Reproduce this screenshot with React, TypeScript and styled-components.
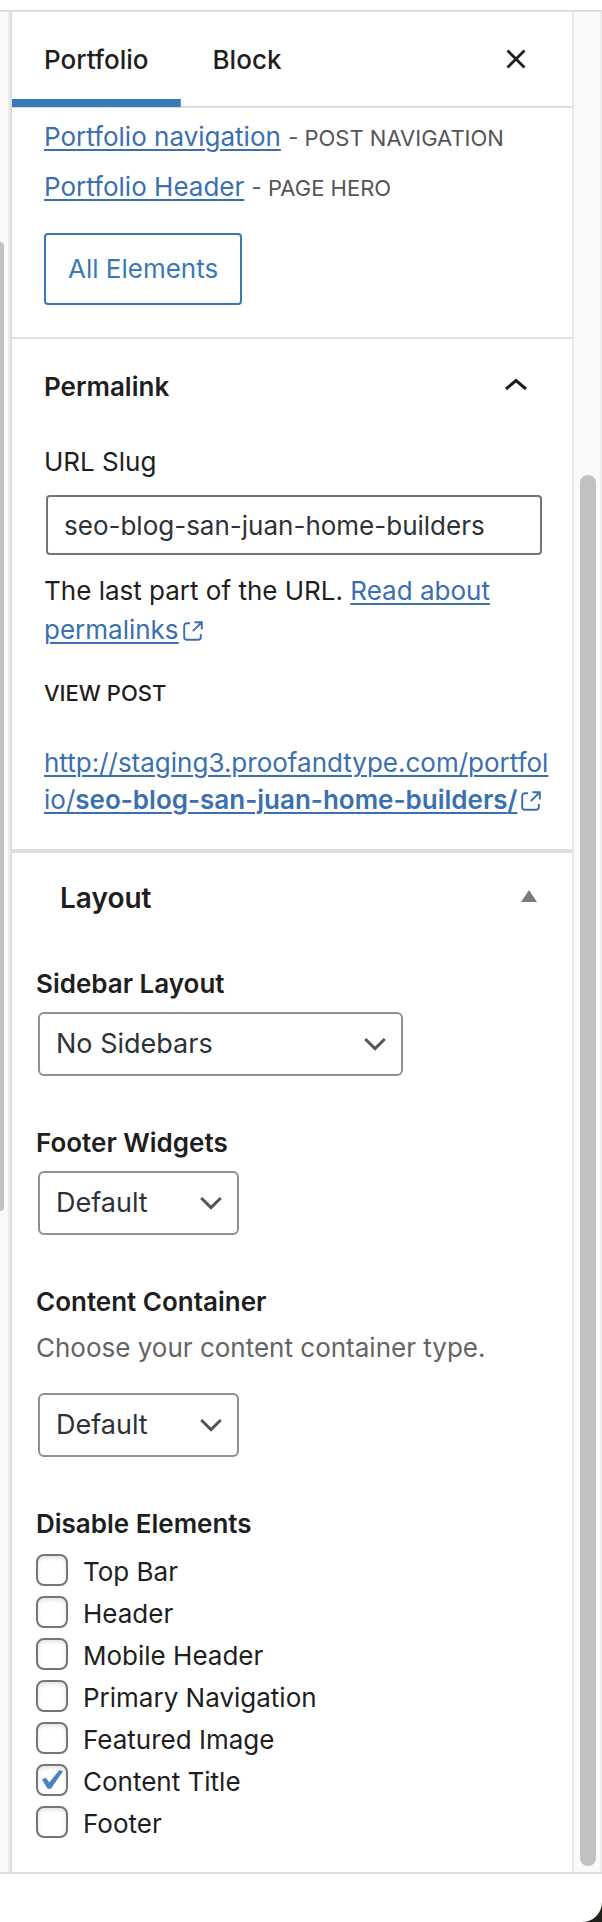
import React, { useState } from "react";
import styled, { createGlobalStyle, css } from "styled-components";

const GlobalStyle = createGlobalStyle`
  *, *::before, *::after { box-sizing: border-box; }
  body {
    margin: 0;
    background: #fff;
    color: #1e1e1e;
    font-family: Inter, "Liberation Sans", sans-serif;
    font-size: 26px;
    line-height: 36px;
  }
  h2, h3, p, fieldset, legend { margin: 0; padding: 0; border: 0; }
  button, input, select { font: inherit; color: inherit; }
`;

const Page = styled.div`
  display: flex;
  flex-direction: column;
  padding-top: 10px;
`;

const Editor = styled.div`
  display: grid;
  grid-template-columns: 8px minmax(0, 1fr) 28px;
  border-top: 2px solid #dedede;
  border-bottom: 2px solid #dedede;
`;

const Rail = styled.div<{ $rows: string }>`
  display: grid;
  grid-template-rows: ${(p) => p.$rows};
  background: #fafafa;
`;

const CanvasRail = styled(Rail)`
  padding-right: 4px;
`;

const PanelRail = styled(Rail)`
  padding: 0 4px 0 6px;
  border-right: 2px solid #ededed;
`;

const Thumb = styled.div<{ $cut?: boolean }>`
  grid-row: 2;
  background: #c1c1c1;
  border-radius: ${(p) => (p.$cut ? "0 8px 8px 0" : "8px")};
`;

const Sidebar = styled.aside`
  border-left: 2px solid #ededed;
  border-right: 2px solid #e8e8e8;
`;

const SidebarInner = styled.div`
  border-left: 2px solid #dcdcdc;
`;

const Tabs = styled.header`
  display: flex;
  height: 96px;
  border-bottom: 2px solid #ddd;
`;

const Tab = styled.button<{ $active?: boolean }>`
  height: 95px;
  padding: 0 32px;
  border: 0;
  background: ${(p) =>
    p.$active ? "linear-gradient(#387ab5, #387ab5) bottom / 100% 8px no-repeat" : "none"};
  font-weight: 500;
`;

const CloseButton = styled.button`
  display: flex;
  align-items: center;
  margin-left: auto;
  padding: 0 46px 0 32px;
  border: 0;
  background: none;
`;

const linkLook = css`
  color: #3a6fb0;
  text-decoration: underline;
  text-decoration-thickness: 2px;
  text-underline-offset: 3px;
`;

const Link = styled.a`
  ${linkLook}

  b { font-weight: 600; }
`;

const ElementsSection = styled.section`
  padding: 11px 32px 32px;
  border-bottom: 2px solid #dfdfdf;
`;

const ElementList = styled.div`
  display: flex;
  flex-direction: column;
  gap: 14px;
  margin-bottom: 28px;
`;

const Kind = styled.span`
  color: #555;
  font-size: 22px;
  line-height: 24px;
  text-transform: uppercase;
`;

const OutlineButton = styled.button`
  display: block;
  height: 72px;
  padding: 0 22px;
  border: 2px solid #387ab5;
  border-radius: 4px;
  background: #fff;
  color: #387ab5;
`;

const PermalinkSection = styled.section`
  padding: 30px 30px 31px 32px;
  border-bottom: 4px solid #dedede;
`;

const SectionToggle = styled.button`
  display: flex;
  align-items: center;
  justify-content: space-between;
  width: 100%;
  padding: 0 15px 0 0;
  border: 0;
  background: none;
  text-align: left;

  & > svg { margin-bottom: 4px; }
`;

const PermalinkTitle = styled.span`
  font-weight: 600;
`;

const SlugLabel = styled.label`
  display: block;
  margin: 39px 0 15px;
`;

const SlugInput = styled.input`
  display: block;
  width: calc(100% - 2px);
  height: 60px;
  margin-left: 2px;
  padding: 0 16px;
  border: 2px solid #757575;
  border-radius: 4px;
  background: #fff;
  color: #2c3338;
`;

const Help = styled.p`
  margin-top: 16px;
  line-height: 39px;
`;

const ViewPost = styled.h3`
  margin: 26px 0 33px;
  font-size: 22px;
  font-weight: 500;
  text-transform: uppercase;
`;

const PostUrl = styled.p`
  margin-right: -8px;
  line-height: 37px;
  word-break: break-all;
`;

const ExternalSvg = styled.svg`
  display: inline-block;
  margin-left: 4px;
  vertical-align: -2px;
`;

const LayoutSection = styled.section`
  padding: 25px 24px 29px;
`;

const LayoutToggle = styled(SectionToggle)`
  padding: 0 11px 0 24px;
`;

const LayoutTitle = styled.span`
  font-size: 28px;
  font-weight: 600;
  line-height: 40px;
`;

const Fields = styled.div`
  display: flex;
  flex-direction: column;
  gap: 49px;
  margin-top: 48px;
`;

const Field = styled.div`
  display: flex;
  flex-direction: column;
  align-items: flex-start;
`;

const FieldLabel = styled.label`
  margin-bottom: 10px;
  font-weight: 600;
`;

const Hint = styled.p`
  margin-bottom: 27px;
  color: #646464;
`;

const SelectWrap = styled.div<{ $wide?: boolean }>`
  display: grid;
  align-items: center;
  width: ${(p) => (p.$wide ? "365px" : "201px")};
  max-width: 100%;
  margin-left: 2px;

  & > * { grid-area: 1 / 1; }
  & > svg { justify-self: end; margin-right: 17px; pointer-events: none; }
`;

const Select = styled.select`
  width: 100%;
  height: 64px;
  padding: 0 50px 0 16px;
  border: 2px solid #8c8f94;
  border-radius: 6px;
  appearance: none;
  background: #fff;
  color: #2c3338;
  font-size: 27px;
`;

const Group = styled.fieldset`
  min-width: 0;
`;

const Legend = styled.legend`
  margin-bottom: 7px;
  font-weight: 600;
`;

const CheckRow = styled.label`
  display: flex;
  align-items: center;
  gap: 15px;
  height: 42px;
`;

const CheckBoxWrap = styled.span`
  display: grid;
  place-items: center;
  & > * { grid-area: 1 / 1; }
  & > svg { pointer-events: none; }
`;

const CheckBox = styled.input`
  width: 32px;
  height: 32px;
  margin: 0;
  appearance: none;
  border: 2px solid #757575;
  border-radius: 8px;
  background: #fff;
  box-shadow: inset 0 2px 4px rgba(0, 0, 0, 0.12);
`;

const CheckText = styled.span`
  padding-top: 3px;
`;

const Footer = styled.footer`
  height: 48px;
  background: #20211d;

  &::before {
    content: "";
    display: block;
    height: 100%;
    border-bottom-right-radius: 20px;
    background: #fff;
  }
`;

const CloseIcon = () => (
  <svg width="20" height="20" viewBox="0 0 20 20" fill="none" stroke="#1e1e1e" strokeWidth="2.8">
    <path d="M1.5 1.5l17 17M18.5 1.5l-17 17" />
  </svg>
);

const ChevronUp = () => (
  <svg width="22" height="14" viewBox="0 0 22 14" fill="none" stroke="#1e1e1e" strokeWidth="3">
    <path d="M1 11l10-8.5L21 11" />
  </svg>
);

const ChevronDown = () => (
  <svg width="22" height="14" viewBox="0 0 22 14" fill="none" stroke="#555" strokeWidth="3">
    <path d="M1.2 2l9.8 9.6L20.8 2" />
  </svg>
);

const Triangle = () => (
  <svg width="16" height="12" viewBox="0 0 16 12">
    <path d="M8 0l8 12H0z" fill="#787c82" />
  </svg>
);

const Tick = () => (
  <svg width="24" height="22" viewBox="0 0 24 22" fill="#4a82c3">
    <path d="M2 10.5l3.8-1.7 3.4 4.6L19.5 1 23 2.2 11 19.8H7.6z" />
  </svg>
);

const ExternalIcon = () => (
  <ExternalSvg width="20" height="20" viewBox="0 0 20 20" fill="none" stroke="#3a6fb0" strokeWidth="1.9" aria-hidden>
    <path d="M7 2.2H4A2.8 2.8 0 0 0 1.2 5v11A2.8 2.8 0 0 0 4 18.8h11a2.8 2.8 0 0 0 2.8-2.8v-3" />
    <path d="M11.5 1.2h7.3v7.3M18.5 1.5L9.8 10.2" />
  </ExternalSvg>
);

const ELEMENTS = [
  "Top Bar",
  "Header",
  "Mobile Header",
  "Primary Navigation",
  "Featured Image",
  "Content Title",
  "Footer",
];

type SelectFieldProps = { id: string; label: string; hint?: string; options: string[]; wide?: boolean };

const SelectField = ({ id, label, hint, options, wide }: SelectFieldProps) => (
  <Field>
    <FieldLabel htmlFor={id}>{label}</FieldLabel>
    {hint && <Hint>{hint}</Hint>}
    <SelectWrap $wide={wide}>
      <Select id={id}>
        {options.map((o) => (
          <option key={o}>{o}</option>
        ))}
      </Select>
      <ChevronDown />
    </SelectWrap>
  </Field>
);

export default function App() {
  const [disabled, setDisabled] = useState<string[]>(["Content Title"]);
  const [slug, setSlug] = useState("seo-blog-san-juan-home-builders");

  const toggle = (name: string) =>
    setDisabled((list) => (list.includes(name) ? list.filter((n) => n !== name) : [...list, name]));

  return (
    <Page>
      <GlobalStyle />
      <Editor>
        <CanvasRail $rows="230fr 969fr 661fr">
          <Thumb $cut />
        </CanvasRail>
        <Sidebar>
          <SidebarInner>
            <Tabs>
              <Tab $active>Portfolio</Tab>
              <Tab>Block</Tab>
              <CloseButton aria-label="Close settings">
                <CloseIcon />
              </CloseButton>
            </Tabs>

            <ElementsSection>
              <ElementList>
                <p>
                  <Link href="#navigation">Portfolio navigation</Link> <Kind>- Post Navigation</Kind>
                </p>
                <p>
                  <Link href="#header">Portfolio Header</Link> <Kind>- Page Hero</Kind>
                </p>
              </ElementList>
              <OutlineButton>All Elements</OutlineButton>
            </ElementsSection>

            <PermalinkSection>
              <SectionToggle aria-expanded="true">
                <PermalinkTitle>Permalink</PermalinkTitle>
                <ChevronUp />
              </SectionToggle>
              <SlugLabel htmlFor="slug">URL Slug</SlugLabel>
              <SlugInput id="slug" value={slug} onChange={(e) => setSlug(e.target.value)} />
              <Help>
                The last part of the URL. <Link href="#permalinks">Read about permalinks</Link>
                <ExternalIcon />
              </Help>
              <ViewPost>View Post</ViewPost>
              <PostUrl>
                <Link href="#post">
                  http://staging3.proofandtype.com/portfolio/<b>{slug}/</b>
                </Link>
                <ExternalIcon />
              </PostUrl>
            </PermalinkSection>

            <LayoutSection>
              <LayoutToggle aria-expanded="true">
                <LayoutTitle>Layout</LayoutTitle>
                <Triangle />
              </LayoutToggle>
              <Fields>
                <SelectField id="sidebar" label="Sidebar Layout" options={["No Sidebars"]} wide />
                <SelectField id="widgets" label="Footer Widgets" options={["Default"]} />
                <SelectField
                  id="container"
                  label="Content Container"
                  hint="Choose your content container type."
                  options={["Default"]}
                />
                <Group>
                  <Legend>Disable Elements</Legend>
                  {ELEMENTS.map((name) => (
                    <CheckRow key={name}>
                      <CheckBoxWrap>
                        <CheckBox
                          type="checkbox"
                          checked={disabled.includes(name)}
                          onChange={() => toggle(name)}
                        />
                        {disabled.includes(name) && <Tick />}
                      </CheckBoxWrap>
                      <CheckText>{name}</CheckText>
                    </CheckRow>
                  ))}
                </Group>
              </Fields>
            </LayoutSection>
          </SidebarInner>
        </Sidebar>
        <PanelRail $rows="463fr 1391fr 6fr">
          <Thumb />
        </PanelRail>
      </Editor>
      <Footer />
    </Page>
  );
}
